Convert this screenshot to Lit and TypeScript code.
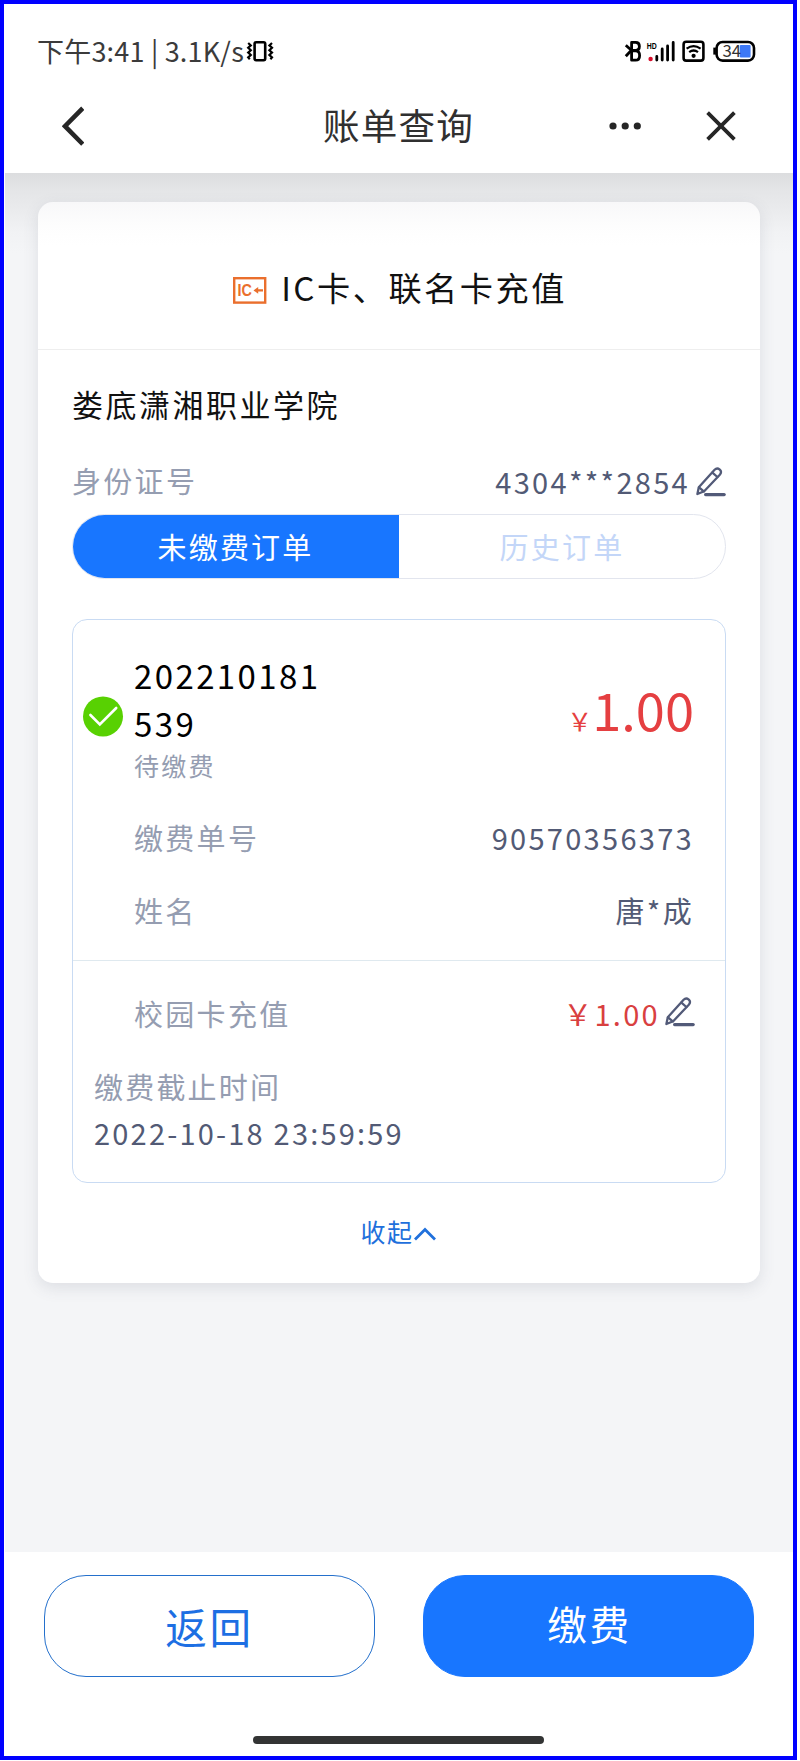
import { LitElement, html, css, svg } from "lit";
import { customElement, property } from "lit/decorators.js";

const YEN = "\uFFE5";

const pencil = html`<svg width="30" height="30" viewBox="0 0 30 30" fill="none" stroke="#525a78" stroke-width="2.3" stroke-linejoin="round" stroke-linecap="round">
  <path d="M1.4 27 L2.8 20.2 L18.6 2.8 Q21 0.4 23.8 2.6 Q26.2 5 23.8 7.8 L8.2 24.2 Z"/>
  <path d="M16.4 5.6 L21.4 10 M3 20.4 L7.8 24.4"/>
  <path d="M9.6 27.6 H28.2" stroke-width="3.2"/>
</svg>`;

@customElement("status-bar")
export class StatusBar extends LitElement {
  static styles = css`
    :host { display: flex; justify-content: space-between; height: 78px; padding: 0 37px 0 33px; box-sizing: border-box; }
    .left { display: flex; align-items: flex-start; color: #3b3b3b; }
    .clock { font-size: 27px; line-height: 40px; margin-top: 27px; letter-spacing: 0.2px; white-space: pre; font-weight: 400; width: 209px; }
    .vibrate { margin-top: 36px; }
    .icons { display: block; margin-top: 36px; overflow: visible; }
  `;
  render() {
    return html`
      <div class="left">
        <span class="clock">下午3:41 | 3.1K/s</span>
        <svg class="vibrate" width="28" height="23" viewBox="0 0 28 23" fill="none" stroke="#000" stroke-width="2.2">
          <rect x="8.6" y="2.2" width="10.6" height="18" rx="1.6" stroke-width="2.6"/>
          ${svg`<path d="M2.2 3 l2.6 2.4 l-2.6 2.4 l2.6 2.4 l-2.6 2.4 l2.6 2.4 l-2.6 2.4 l1.6 1.8"/><path d="M26 3 l-2.6 2.4 l2.6 2.4 l-2.6 2.4 l2.6 2.4 l-2.6 2.4 l2.6 2.4 l-1.6 1.8"/>`}
        </svg>
      </div>
      <svg class="icons" width="131" height="23" viewBox="0 0 131 23" fill="none" stroke="#000">
        <g stroke-width="2.8" stroke-linejoin="round">
          <path d="M0.8 5.2 L6.4 10.2 L0.8 16.2"/>
          <path d="M6.6 2.4 H10.6 Q14.4 2.4 14.4 6.3 Q14.4 10.4 10.6 10.4 H6.6 Z M6.6 10.8 H10.6 Q14.6 10.8 14.6 15.4 Q14.6 20.2 10.6 20.2 H6.6 Z"/>
        </g>
        <text x="21.8" y="8.8" font-family="Liberation Sans" font-weight="700" font-size="8.6" textLength="10" lengthAdjust="spacingAndGlyphs" fill="#000" stroke="none">HD</text>
        <circle cx="25.6" cy="19" r="2.2" fill="#d80f2c" stroke="none"/>
        <path d="M31.8 16.4 V20 M37.2 9 V20 M42.6 6 V20 M48.2 2.4 V20" stroke-width="2.8" stroke-linecap="round"/>
        <rect x="58.6" y="1.8" width="19.8" height="18.8" rx="2.6" stroke-width="2.6"/>
        <path d="M61.6 8.6 Q68.6 3.6 75.6 8.6 M64.2 12.2 Q68.6 8.8 73 12.2" stroke-width="2.2"/>
        <circle cx="68.6" cy="15.8" r="2.1" fill="#000" stroke="none"/>
        <rect x="91.6" y="2" width="37.4" height="18.6" rx="6" stroke-width="2.6"/>
        <path d="M89.6 7.6 V14.6" stroke-width="2.6"/>
        <rect x="114.8" y="5" width="10.8" height="12.6" rx="1" fill="#3d78f6" stroke="none"/>
        <text x="97.4" y="17.2" font-family="Noto Sans CJK SC" font-size="16.8" font-weight="400" fill="#333" stroke="none">34</text>
      </svg>`;
  }
}

@customElement("nav-bar")
export class NavBar extends LitElement {
  static styles = css`
    :host { display: grid; grid-template-columns: 1fr auto 1fr; align-items: center; height: 91px; padding: 0 57px 4px 58px; box-sizing: border-box; }
    .title { font-size: 36.6px; line-height: 54px; letter-spacing: 1.2px; color: #303030; margin: -2px 1px 0 0; }
    .actions { justify-self: end; display: flex; align-items: center; gap: 65px; }
    svg { display: block; }
  `;
  render() {
    return html`
      <svg width="22" height="40" viewBox="0 0 22 40" fill="none" stroke="#262626" stroke-width="4.6"><path d="M20.8 2.2 L3 20.2 L20.8 38.2"/></svg>
      <span class="title">账单查询</span>
      <div class="actions">
        <svg width="32" height="8" viewBox="0 0 32 8" fill="#262626"><circle cx="4" cy="4" r="3.6"/><circle cx="16.2" cy="4" r="3.6"/><circle cx="28.3" cy="4" r="3.6"/></svg>
        <svg width="30" height="30" viewBox="0 0 30 30" stroke="#262626" stroke-width="3.8"><path d="M1.6 1.6 L28.4 28.4 M28.4 1.6 L1.6 28.4"/></svg>
      </div>`;
  }
}

@customElement("info-row")
export class InfoRow extends LitElement {
  @property() label = "";
  static styles = css`
    :host { display: flex; justify-content: space-between; align-items: center; height: 73px; font-size: 29px; line-height: 42px; letter-spacing: 2.3px; color: #525a75; }
    .label { color: #959db1; }
    .value { display: flex; align-items: center; }
  `;
  render() {
    return html`<span class="label">${this.label}</span><span class="value"><slot></slot></span>`;
  }
}

@customElement("order-box")
export class OrderBox extends LitElement {
  static styles = css`
    :host { display: block; border: 1.4px solid #c9dbf3; border-radius: 15px; height: 564px; box-sizing: border-box; }
    .top { height: 341px; box-sizing: border-box; border-bottom: 1.4px solid #dfe9ef; padding: 31px 31px 0 10px; display: grid; grid-template-columns: 51px 1fr; align-items: start; }
    .check { margin-top: 45px; display: block; }
    .head { display: flex; justify-content: space-between; height: 150px; }
    .num { font-size: 33px; line-height: 48px; letter-spacing: 2.4px; color: #000; width: 200px; word-break: break-all; }
    .state { font-size: 25px; line-height: 36px; letter-spacing: 2.3px; color: #959db1; }
    .price { display: flex; align-items: baseline; color: #e53f41; font-size: 52.4px; line-height: 76px; margin-top: 19px; }
    .yen { font-size: 25px; }
    .rows { grid-column: 2; margin-top: -15px; }
    .bottom { padding: 15px 31px 0 21px; }
    .item { padding-left: 40px; }
    .red { color: #d9403f; }
    .edit { display: block; margin: -2px -1px 0 5px; }
    .edit svg { display: block; }
    .deadline { font-size: 29px; letter-spacing: 2.2px; line-height: 46px; color: #525a75; display: flex; flex-direction: column; margin-top: 16px; }
    .deadline .label { line-height: 42px; color: #959db1; margin-bottom: 2px; }
  `;
  render() {
    return html`
      <div class="top">
        <svg class="check" width="41" height="41" viewBox="0 0 41 41"><circle cx="20" cy="20.4" r="20" fill="#58d102"/><path d="M7.4 19 L16.8 28.4 L33.2 12" fill="none" stroke="#fff" stroke-width="2.6" stroke-linecap="round"/></svg>
        <div class="head">
          <div><div class="num">202210181539</div><div class="state">待缴费</div></div>
          <div class="price"><span class="yen">${YEN}</span><span>1.00</span></div>
        </div>
        <div class="rows">
          <info-row label="缴费单号">90570356373</info-row>
          <info-row label="姓名">唐*成</info-row>
        </div>
      </div>
      <div class="bottom">
        <info-row class="item" label="校园卡充值"><span class="red">${YEN}1.00</span><span class="edit">${pencil}</span></info-row>
        <div class="deadline"><span class="label">缴费截止时间</span><span>2022-10-18 23:59:59</span></div>
      </div>`;
  }
}

@customElement("app-root")
export class AppRoot extends LitElement {
  static styles = css`
    :host { display: block; width: 800px; height: 1761px; overflow: hidden; background: #fff; font-family: "Noto Sans CJK SC", sans-serif; font-weight: 400; }
    .frame { width: 797px; height: 1760px; box-sizing: border-box; border: 4px solid #00f; display: flex; flex-direction: column; background: #fff; }
    .page { height: 1379px; box-sizing: border-box; padding: 29px 33px 0 34px; margin-left: 1px; background: linear-gradient(#dcdddf 0, #e4e5e7 16px, #e9eaec 34px, #f1f2f4 58px, #f4f5f7 80px); }
    .card { height: 1081px; border-radius: 15px; background: linear-gradient(#f8f8f9, #fdfdfd 24px, #fff 44px); box-shadow: 0 5px 16px rgba(70, 80, 100, 0.13); margin-left: -1px; }
    .head { height: 148px; box-sizing: border-box; border-bottom: 1.4px solid #eee; display: flex; justify-content: center; padding: 61px 0 0 2px; color: #111; font-size: 33.2px; line-height: 48px; letter-spacing: 2.5px; gap: 14px; }
    .head svg { display: block; margin-top: 14px; }
    .body { padding: 0 34px; }
    .school { margin-top: 32px; font-size: 31px; line-height: 44px; letter-spacing: 2.5px; color: #111; }
    .id { height: 85px; margin-top: 11px; }
    .idv { margin-top: 3px; }
    .edit { margin: 5px 0 0 6px; }
    .edit svg { display: block; }
    .tabs { display: grid; grid-template-columns: 326px 1fr; height: 65px; margin-top: -8px; box-sizing: border-box; border: 1.4px solid #e2e5ee; border-radius: 33px; overflow: hidden; font-size: 29px; line-height: 62px; letter-spacing: 2.2px; text-align: center; color: #c3d6f8; }
    .on { background: #1876ff; color: #fff; margin: -1px 0 -1px -1px; line-height: 64px; }
    order-box { margin-top: 40px; }
    .fold { display: flex; justify-content: center; align-items: center; height: 36px; margin-top: 30px; color: #1f70dc; font-size: 25px; letter-spacing: 1.6px; padding-right: 2px; }
    .fold svg { display: block; margin-top: 5px; }
    .actions { display: flex; justify-content: space-between; padding: 23px 39px 0 40px; }
    .btn { width: 331px; height: 102px; box-sizing: border-box; border-radius: 42px; border: 1.4px solid #2470cc; font-size: 41.6px; letter-spacing: 2.6px; text-align: center; line-height: 101px; color: #1d6fe3; }
    .solid { background: #1876ff; border-color: #1876ff; color: #fff; line-height: 94px; font-size: 39.6px; text-indent: 2px; }
    .home { width: 291px; height: 8px; border-radius: 4px; background: #333434; margin: 59px 0 0 249px; }
  `;
  render() {
    return html`
      <div class="frame">
        <status-bar></status-bar>
        <nav-bar></nav-bar>
        <main class="page">
          <section class="card">
            <div class="head">
              <svg width="34" height="27" viewBox="0 0 34 27"><rect x="1.2" y="1.2" width="31" height="24.4" fill="none" stroke="#ea6f2d" stroke-width="2.4"/><text x="4.4" y="19.2" font-family="Liberation Sans" font-weight="700" font-size="17" letter-spacing="0" textLength="14.4" lengthAdjust="spacingAndGlyphs" fill="#ea6f2d">IC</text><path d="M20.5 13.4 L25.2 10 V12.2 H30 V14.6 H25.2 V16.8 Z" fill="#ea6f2d"/></svg>
              <span>IC卡、联名卡充值</span>
            </div>
            <div class="body">
              <div class="school">娄底潇湘职业学院</div>
              <info-row class="id" label="身份证号"><span class="idv">4304***2854</span><span class="edit">${pencil}</span></info-row>
              <div class="tabs"><span class="on">未缴费订单</span><span>历史订单</span></div>
              <order-box></order-box>
              <div class="fold"><span>收起</span><svg width="22" height="14" viewBox="0 0 22 14" fill="none" stroke="#2070dc" stroke-width="2.8"><path d="M1 12.4 L11 2.4 L21 12.4"/></svg></div>
            </div>
          </section>
        </main>
        <div class="actions"><div class="btn">返回</div><div class="btn solid">缴费</div></div>
        <div class="home"></div>
      </div>`;
  }
}
